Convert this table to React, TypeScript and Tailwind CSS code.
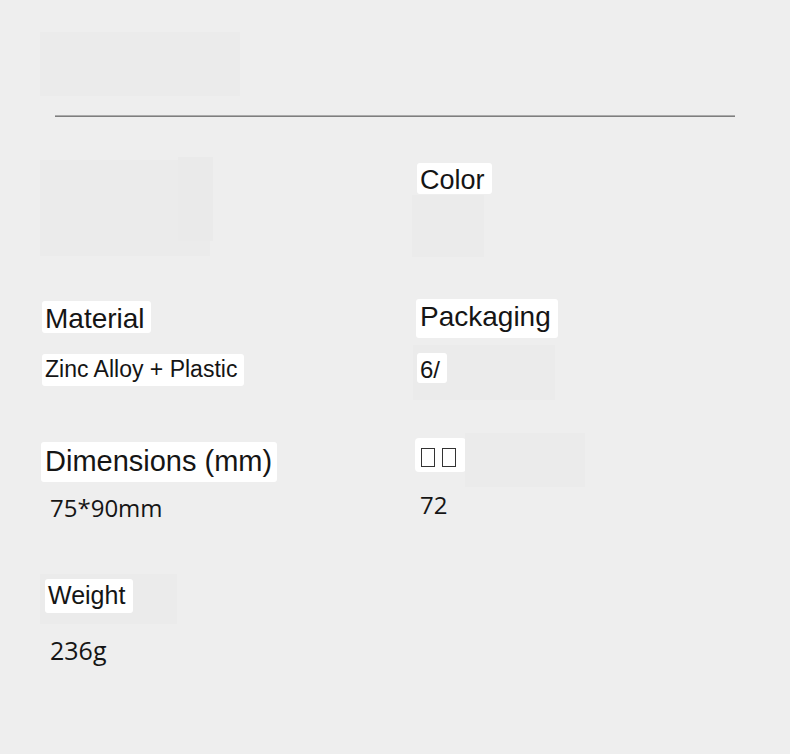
import React from "react";

const label = "font-['Liberation_Sans',Arial,sans-serif] text-[#151515]";
const value = "font-['Open_Sans','Noto_Sans',sans-serif] text-[#151515]";

function Tofu() {
  return <span className="inline-block w-[14px] h-[19px] border-[1.5px] border-[#333]" />;
}

export default function App() {
  return (
    <div className="w-[790px] h-[754px] bg-[#eeeeee] overflow-hidden pt-[32px]">
      <div className="ml-[40px] w-[200px] h-[64px] bg-[#ebebeb]" />
      <div className="ml-[55px] mt-[19px] w-[680px]">
        <div className="h-px bg-[#ababab]" />
        <div className="h-px bg-[#7e7e7e]" />
      </div>

      <div className="flex">
        {/* left column */}
        <div className="w-[412px] shrink-0 pl-[40px] flex flex-col items-start">
          <div className="mt-[40px] flex">
            <div className="w-[138px] h-[96px] mt-[3px] bg-[#ebebeb]" />
            <div className="flex flex-col">
              <div className="w-[35px] h-[84px] bg-[#eaeaea]" />
              <div className="w-[32px] h-[15px] bg-[#ebebeb]" />
            </div>
          </div>

          <div className={`${label} mt-[45px] ml-[2px] w-[109px] h-[32px] bg-white rounded-[3px] pl-[3px] pt-[4px] text-[28px] leading-[28px] whitespace-nowrap`}>
            Material
          </div>
          <div className={`${label} mt-[21px] ml-[2px] w-[202px] h-[32px] bg-white rounded-[3px] pl-[3px] pt-[4px] text-[23px] leading-[23px] whitespace-nowrap`}>
            Zinc Alloy + Plastic
          </div>
          <div className={`${label} mt-[56px] ml-[1px] w-[236px] h-[40px] bg-white rounded-[3px] pl-[4px] pt-[5px] text-[29px] leading-[29px] whitespace-nowrap`}>
            Dimensions (mm)
          </div>
          <div className={`${value} mt-[14px] ml-[10px] text-[24px] leading-[24px]`}>75*90mm</div>

          <div className="mt-[54px] w-[137px] h-[50px] bg-[#ebebeb] pt-[5px] pl-[5px]">
            <div className={`${label} w-[88px] h-[34px] bg-white rounded-[3px] pl-[3px] pt-[4px] text-[25px] leading-[25px] whitespace-nowrap`}>
              Weight
            </div>
          </div>
          <div className={`${value} mt-[14px] ml-[10px] text-[25px] leading-[25px]`}>236g</div>
        </div>

        {/* right column */}
        <div className="flex flex-col items-start">
          <div className={`${label} mt-[46px] ml-[5px] w-[75px] h-[31px] bg-white rounded-[3px] pl-[3px] pt-[4px] text-[27px] leading-[27px] whitespace-nowrap`}>
            Color
          </div>
          <div className="mt-[1px] w-[72px] h-[62px] bg-[#ebebeb]" />

          <div className={`${label} mt-[42px] ml-[4px] w-[142px] h-[39px] bg-white rounded-[3px] pl-[4px] pt-[4px] text-[28px] leading-[28px] whitespace-nowrap`}>
            Packaging
          </div>
          <div className="mt-[7px] ml-[1px] w-[142px] h-[55px] bg-[#ebebeb] pt-[8px] pl-[4px]">
            <div className={`${label} w-[30px] h-[30px] bg-white rounded-[3px] pl-[3px] pt-[5px] text-[24px] leading-[24px] whitespace-nowrap`}>
              6/
            </div>
          </div>

          <div className="mt-[33px] flex items-start">
            <div className="ml-[3px] mt-[5px] w-[51px] h-[34px] bg-white rounded-[4px] pt-[10px] pl-[6px] flex gap-[7px]" aria-label="□□">
              <Tofu />
              <Tofu />
            </div>
            <div className="-ml-[1px] w-[120px] h-[54px] bg-[#ebebeb]" />
          </div>
          <div className={`${value} mt-[6px] ml-[8px] text-[24px] leading-[24px]`}>72</div>
        </div>
      </div>
    </div>
  );
}
